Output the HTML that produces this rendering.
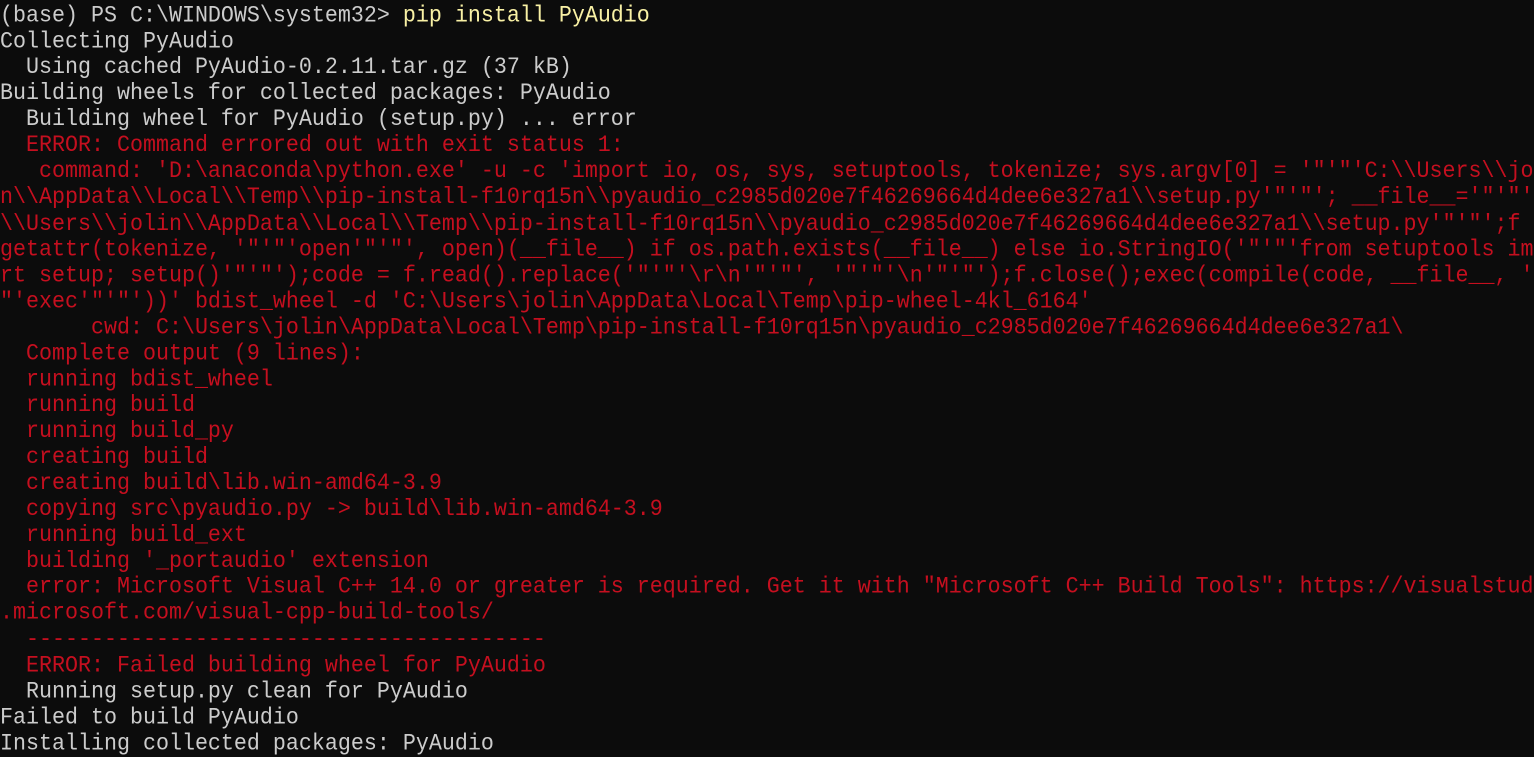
<!DOCTYPE html>
<html><head><meta charset="utf-8"><style>
html,body{margin:0;padding:0;background:#0c0c0c;width:1534px;height:749px;overflow:hidden}
pre{margin:0;position:absolute;left:0;top:3px;font-family:"Liberation Mono",monospace;font-size:21.67px;line-height:24.07px;color:#cccccc;white-space:pre;transform:scaleY(1.08);transform-origin:0 0}
.y{color:#f9f1a5}.r{color:#c50f1f}
</style></head><body><pre>(base) PS C:\WINDOWS\system32&gt; <span class="y">pip install PyAudio</span>
Collecting PyAudio
  Using cached PyAudio-0.2.11.tar.gz (37 kB)
Building wheels for collected packages: PyAudio
  Building wheel for PyAudio (setup.py) ... error
<span class="r">  ERROR: Command errored out with exit status 1:
   command: 'D:\anaconda\python.exe' -u -c 'import io, os, sys, setuptools, tokenize; sys.argv[0] = '"'"'C:\\Users\\jo
n\\AppData\\Local\\Temp\\pip-install-f10rq15n\\pyaudio_c2985d020e7f46269664d4dee6e327a1\\setup.py'"'"'; __file__='"'"'
\\Users\\jolin\\AppData\\Local\\Temp\\pip-install-f10rq15n\\pyaudio_c2985d020e7f46269664d4dee6e327a1\\setup.py'"'"';f
getattr(tokenize, '"'"'open'"'"', open)(__file__) if os.path.exists(__file__) else io.StringIO('"'"'from setuptools im
rt setup; setup()'"'"');code = f.read().replace('"'"'\r\n'"'"', '"'"'\n'"'"');f.close();exec(compile(code, __file__, '
"'exec'"'"'))' bdist_wheel -d 'C:\Users\jolin\AppData\Local\Temp\pip-wheel-4kl_6164'
       cwd: C:\Users\jolin\AppData\Local\Temp\pip-install-f10rq15n\pyaudio_c2985d020e7f46269664d4dee6e327a1\
  Complete output (9 lines):
  running bdist_wheel
  running build
  running build_py
  creating build
  creating build\lib.win-amd64-3.9
  copying src\pyaudio.py -&gt; build\lib.win-amd64-3.9
  running build_ext
  building '_portaudio' extension
  error: Microsoft Visual C++ 14.0 or greater is required. Get it with "Microsoft C++ Build Tools": https://visualstud
.microsoft.com/visual-cpp-build-tools/
  ----------------------------------------
  ERROR: Failed building wheel for PyAudio</span>
  Running setup.py clean for PyAudio
Failed to build PyAudio
Installing collected packages: PyAudio</pre></body></html>
